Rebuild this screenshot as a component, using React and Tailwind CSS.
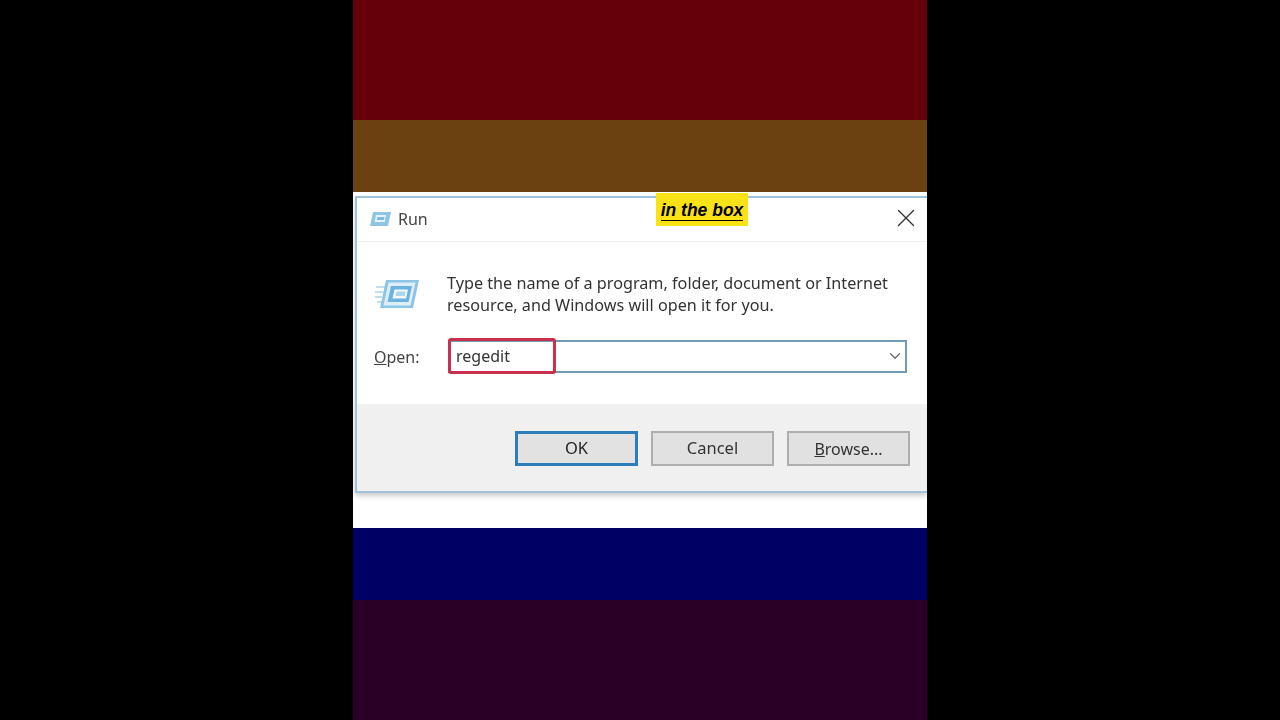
import React from 'react';
import { X, ChevronDown } from 'lucide-react';

const RunIcon = ({ className }) => (
  <svg viewBox="0 0 46 32" className={className} fill="none">
    {/* speed lines */}
    <path d="M1 9h9M0 14h8M0 19h7M2 24h5" stroke="#a9d3ec" strokeWidth="1.6" />
    {/* slanted panel */}
    <path d="M11 2h33l-6 28H5z" fill="#8cc5e8" />
    <path d="M13.5 4.500h27l-5 23h-27z" fill="#dceff9" />
    <path d="M16 8h21l-3.500 16H12.500z" fill="#6cb2de" />
    <path d="M19.500 11.500h13.500l-2 9H17.500z" fill="#f0f8fc" />
    <path d="M21.500 13.500h9l-.8 4.500h-9.200z" fill="#a9d5ee" />
  </svg>
);

const TitleIcon = ({ className }) => (
  <svg viewBox="0 0 21 14" className={className} fill="none">
    <path d="M3 0h18l-3 14H0z" fill="#8fc4e4" />
    <path d="M6 3h10l-1.300 7H4.500z" fill="#e6f3fa" />
    <path d="M7.500 5h7l-.6 3H6.800z" fill="#7fb9dd" />
  </svg>
);

const DialogButton = ({ children, primary }) => (
  <button
    className={
      primary
        ? 'w-[123px] h-[35px] bg-[#e2e2e2] border-[3px] border-[#2f7db8] text-[#222] text-[16.500px] flex items-center justify-center'
        : 'w-[123px] h-[35px] bg-[#e1e1e1] border-2 border-[#aeaeae] text-[#333] text-[16.500px] flex items-center justify-center'
    }
  >
    {children}
  </button>
);

const App = () => {
  return (
    <div className="w-[1280px] h-[720px] bg-black flex justify-center overflow-hidden font-['Noto_Sans','Open_Sans',sans-serif]">
      <div className="w-[574px] flex flex-col">
        <div className="h-[120px] bg-[#65000a]" />
        <div className="h-[72px] bg-[#6b4112]" />

        {/* screenshot of the Run dialog */}
        <div className="h-[336px] bg-white pt-[4px] pl-[2px] relative">
          <div className="h-[297px] border-2 border-r-0 border-[#9fc3da] flex flex-col shadow-[0_3px_5px_rgba(0,0,0,0.2)] blur-[0.4px]">
            <div className="h-[44px] shrink-0 flex items-center pl-[13px] pr-[6px] pb-[2px] border-b border-[#f0f0f0]">
              <TitleIcon className="w-[21px] h-[14px]" />
              <span className="ml-[7px] text-[16px] text-[#444]">Run</span>
              <X className="ml-auto mb-[2px] w-[30px] h-[30px] text-[#333]" strokeWidth={1.1} />
            </div>

            <div className="h-[162px] shrink-0 bg-white pl-[17px] pr-[18px]">
              <div className="flex pt-[30px]">
                <RunIcon className="w-[46px] h-[32px] mt-[6px] ml-[1px] mr-[26px] shrink-0" />
                <p className="text-[16.200px] leading-[22px] text-[#333] whitespace-nowrap">
                  Type the name of a program, folder, document or Internet
                  <br />
                  resource, and Windows will open it for you.
                </p>
              </div>
              <div className="flex items-center mt-[24px]">
                <span className="w-[74px] text-[16px] text-[#444]">
                  <span className="underline">O</span>pen:
                </span>
                <div className="relative w-[459px] h-[33px] border-2 border-[#6d9cb4] flex items-center pl-[6px] pb-[2px] text-[16px] text-[#333]">
                  regedit
                  <ChevronDown className="absolute right-[1px] w-[18px] h-[18px] text-[#666]" strokeWidth={1.6} />
                  {/* red highlight over the field */}
                  <div className="absolute -left-[2px] -top-[4px] w-[108px] h-[36px] border-[3px] border-[#c9304f] rounded-[3px]" />
                </div>
              </div>
            </div>

            <div className="flex-1 bg-[#f0f0f0] flex justify-end gap-[13px] pt-[27px] pr-[17px]">
              <DialogButton primary>OK</DialogButton>
              <DialogButton>Cancel</DialogButton>
              <DialogButton>
                <span className="text-[16px]">
                  <span className="underline">B</span>rowse...
                </span>
              </DialogButton>
            </div>
          </div>

          {/* caption sticker */}
          <div className="absolute left-[303px] top-[1px] w-[92px] h-[33px] bg-[#fbe216] flex flex-col items-center justify-center pt-[1px]">
            <span className="text-[17.500px] leading-[20px] italic font-bold text-black border-b border-black font-['Liberation_Sans',sans-serif]">
              in the box
            </span>
          </div>
        </div>

        <div className="h-[72px] bg-[#000064]" />
        <div className="h-[120px] bg-[#2b0027]" />
      </div>
    </div>
  );
};

export default App;
